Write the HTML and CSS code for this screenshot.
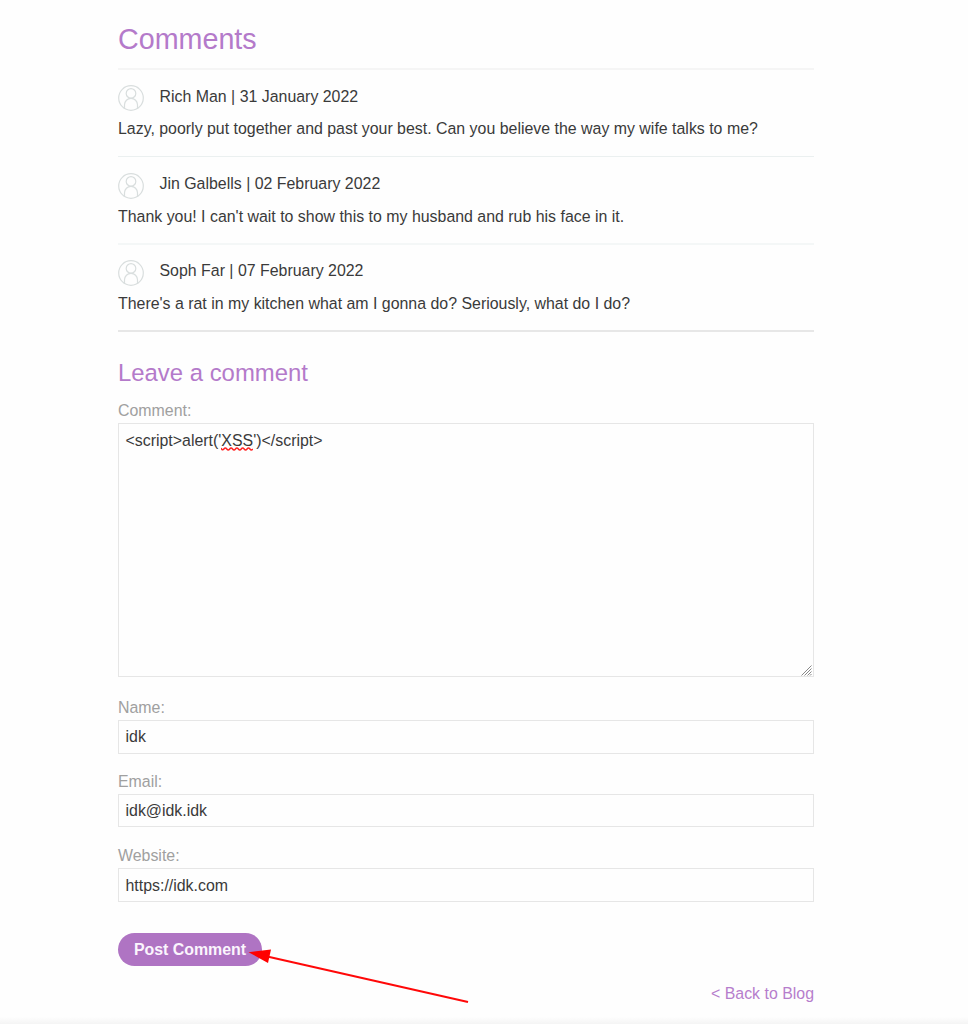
FILE: index.html
```html
<!DOCTYPE html>
<html lang="en">
<head>
<meta charset="utf-8">
<title>Comments</title>
<link rel="stylesheet" href="styles.css">
</head>
<body>
<svg class="symbols" aria-hidden="true">
  <symbol id="avatar" viewBox="0 0 26 26">
    <circle cx="13" cy="13" r="12.3"/>
    <circle cx="13" cy="8.4" r="4.8"/>
    <path d="M6.500 24V19.800a6.500 6.500 0 0 1 13 0V24"/>
  </symbol>
</svg>
<main class="page">
  <h1 class="title">Comments</h1>
  <section class="comment">
    <p class="author"><svg class="avatar"><use href="#avatar"/></svg><span>Rich Man | 31 January 2022</span></p>
    <p class="text">Lazy, poorly put together and past your best. Can you believe the way my wife talks to me?</p>
  </section>
  <section class="comment">
    <p class="author"><svg class="avatar"><use href="#avatar"/></svg><span>Jin Galbells | 02 February 2022</span></p>
    <p class="text">Thank you! I can't wait to show this to my husband and rub his face in it.</p>
  </section>
  <section class="comment">
    <p class="author"><svg class="avatar"><use href="#avatar"/></svg><span>Soph Far | 07 February 2022</span></p>
    <p class="text">There's a rat in my kitchen what am I gonna do? Seriously, what do I do?</p>
  </section>
  <form class="form">
    <h2 class="subtitle">Leave a comment</h2>
    <label class="label">Comment:</label>
    <div class="field area"><span>&lt;script&gt;alert('<span class="misspelled">XSS<svg class="squiggle" viewBox="0 0 33 4"><path d="M0 1Q1.500 4 3 2T6 2T9 2T12 2T15 2T18 2T21 2T24 2T27 2T30 2T33 2"/></svg></span>')&lt;/script&gt;</span>
      <svg class="grip" viewBox="0 0 11 11"><path d="M.5 10.5l10-10M3.5 10.5l7-7M6.500 10.5l4-4M9 10.500l1.500-1.500"/></svg>
    </div>
    <label class="label">Name:</label>
    <div class="field name">idk</div>
    <label class="label email-label">Email:</label>
    <div class="field email">idk@idk.idk</div>
    <label class="label">Website:</label>
    <div class="field website">https://idk.com</div>
    <button class="button" type="button">Post Comment</button>
  </form>
  <a class="back">&lt; Back to Blog</a>
</main>
<svg class="arrow" viewBox="0 0 230 64"><path class="shaft" d="M25 8L228 54"/><path class="head" d="M8.500 4.200L31 1.500L28 15Z"/></svg>
</body>
</html>
```
FILE: styles.css
```css
* { box-sizing: border-box; }
body {
  margin: 0;
  height: 1024px;
  overflow: hidden;
  position: relative;
  background: linear-gradient(#fefefe 0 1017px, #f4f4f4 1024px);
  color: #3a3a3a;
  font: 15.920px/20px "Liberation Sans", Arial, sans-serif;
}
h1, h2, p { margin: 0; font-weight: 400; }
.symbols { display: none; }
.page { display: flex; flex-direction: column; width: 696px; margin-left: 118px; padding-top: 22px; }
.title { height: 46px; color: #b47aca; font-size: 28.700px; line-height: 34px; }
.comment { height: 88px; padding-top: 16px; border-top: 1px solid #ebf0f0; }
.comment:nth-of-type(1) { border-top: 2px solid #f5f5f5; padding-top: 15px; }
.comment:nth-of-type(2) { height: 87px; }
.comment:nth-of-type(3) { height: 87px; border-top: 2px solid #f4f7f7; padding-top: 15px; }
.author { display: flex; align-items: flex-start; gap: 15.500px; height: 33px; line-height: 22px; }
.comment:nth-of-type(1) .author { height: 34px; line-height: 24px; }
.avatar { width: 26px; height: 26px; margin-top: 0; fill: none; stroke: #d9dede; stroke-width: 1.200; }
.comment:nth-of-type(n+2) .text { line-height: 22px; }
.form { display: flex; flex-direction: column; height: 637px; padding-top: 26px; border-top: 2px solid #e7e7e7; }
.subtitle { height: 42px; color: #b47aca; font-size: 23.900px; line-height: 30px; }
.label { height: 23px; color: #a0a0a0; line-height: 22px; }
.field { position: relative; height: 34px; padding: 5px 6.500px; border: 1px solid #e6e6e6; line-height: 22px; }
.area { height: 254px; margin-bottom: 20px; line-height: 24px; }
.name { margin-bottom: 18px; }
.email-label { height: 22px; line-height: 20px; }
.email { height: 33px; margin-bottom: 18px; }
.website { height: 34px; line-height: 24px; }
.misspelled { position: relative; }
.squiggle { position: absolute; left: 0; bottom: -2px; width: 100%; height: 4px; fill: none; stroke: #f22; stroke-width: 1.500; }
.grip { position: absolute; right: 1px; bottom: 0; width: 11px; height: 11px; stroke: #888; stroke-width: 1; }
.button { width: 144px; height: 33px; margin-top: 31px; padding: 0; border: 0; border-radius: 17px; background: #af74c3; color: #fbf5fd; font: bold 15.920px/33px "Liberation Sans", Arial, sans-serif; }
.back { align-self: flex-end; margin-top: 17px; color: #b67dcc; }
.arrow { position: absolute; left: 240px; top: 948px; width: 230px; height: 64px; }
.shaft { stroke: #ff0808; stroke-width: 2; }
.head { fill: #f00; }
```
